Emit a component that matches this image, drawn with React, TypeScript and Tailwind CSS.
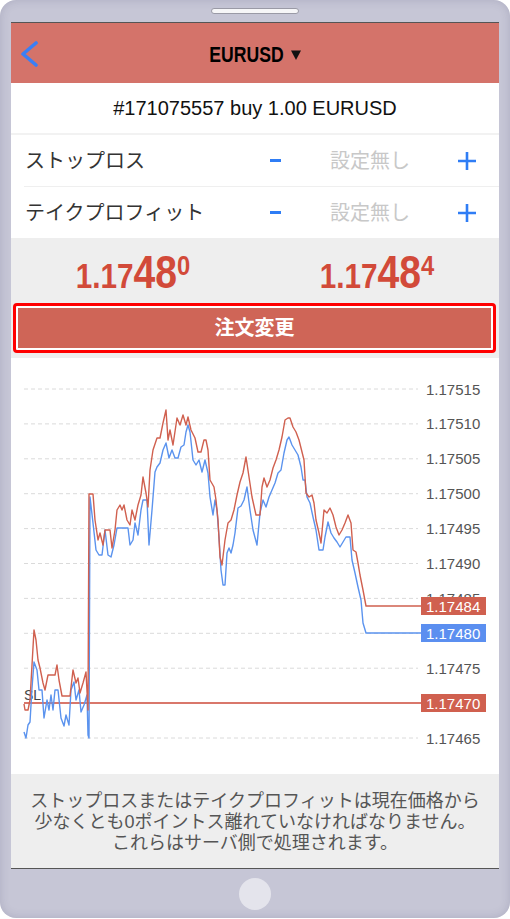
import React from 'react';

// screen-space points of the ask (red) and bid (blue) series, shifted into the chart svg below
const ASK: [number, number][] = [
  [24, 704], [25, 710], [28, 710], [30, 700], [34, 630], [36, 640], [38, 660], [40, 668], [43, 683], [45, 690],
  [48, 675], [55, 675], [57, 665], [59, 680], [62, 696], [70, 696], [73, 670], [76, 683], [78, 678], [80, 693],
  [83, 683], [86, 672], [88, 710], [89, 494], [93, 494], [95, 520], [98, 540], [100, 533], [103, 545], [105, 530],
  [110, 530], [112, 548], [115, 530], [117, 510], [120, 505], [122, 510], [124, 505], [127, 520], [130, 525],
  [132, 510], [135, 520], [138, 505], [141, 495], [143, 477], [146, 493], [148, 507], [150, 470], [153, 450],
  [157, 438], [160, 438], [163, 423], [166, 410], [168, 440], [170, 430], [173, 445], [177, 418], [180, 425],
  [183, 415], [186, 425], [188, 417], [191, 430], [195, 438], [198, 452], [201, 452], [204, 440], [206, 440],
  [208, 450], [210, 480], [214, 487], [216, 500], [218, 520], [220, 557], [222, 565], [225, 540], [228, 523],
  [231, 520], [234, 510], [237, 495], [240, 482], [243, 473], [246, 457], [249, 477], [252, 497], [256, 515],
  [260, 515], [262, 487], [264, 478], [267, 487], [270, 480], [273, 468], [276, 460], [279, 450], [282, 437],
  [285, 420], [288, 418], [290, 418], [293, 427], [296, 432], [299, 440], [302, 452], [304, 460], [306, 493],
  [309, 497], [312, 495], [314, 503], [316, 520], [319, 533], [321, 543], [324, 510], [327, 513], [330, 508],
  [333, 515], [336, 527], [339, 535], [342, 530], [345, 523], [348, 515], [351, 523], [353, 550], [356, 552],
  [358, 563], [360, 575], [363, 590], [366, 606], [421, 606],
];

const BID: [number, number][] = [
  [24, 732], [26, 738], [28, 725], [30, 722], [32, 688], [34, 662], [37, 670], [39, 690], [42, 690], [44, 718],
  [47, 700], [49, 710], [51, 695], [53, 710], [55, 690], [58, 690], [61, 718], [64, 726], [66, 715], [69, 725],
  [71, 690], [74, 682], [76, 700], [79, 690], [81, 712], [84, 705], [87, 695], [88, 735], [89, 738], [90, 497],
  [93, 523], [96, 550], [99, 555], [102, 555], [105, 530], [108, 555], [111, 557], [114, 545], [117, 528],
  [120, 528], [128, 528], [130, 545], [133, 540], [135, 523], [138, 535], [141, 510], [143, 500], [147, 500],
  [149, 545], [152, 510], [155, 472], [157, 467], [160, 463], [163, 450], [166, 443], [169, 458], [172, 450],
  [175, 458], [178, 458], [181, 447], [184, 445], [186, 432], [188, 425], [190, 432], [193, 460], [196, 465],
  [199, 460], [202, 472], [205, 460], [208, 473], [210, 497], [213, 515], [215, 500], [217, 510], [219, 537],
  [221, 570], [223, 585], [225, 585], [227, 553], [229, 548], [231, 553], [233, 545], [235, 533], [238, 508],
  [241, 506], [244, 500], [247, 487], [250, 510], [253, 530], [257, 545], [260, 513], [263, 500], [266, 507],
  [269, 497], [272, 490], [275, 483], [278, 473], [281, 470], [284, 453], [287, 440], [289, 437], [292, 445],
  [295, 450], [298, 455], [301, 467], [303, 480], [305, 480], [307, 497], [310, 503], [313, 517], [316, 530],
  [319, 550], [323, 550], [325, 537], [328, 522], [331, 533], [334, 538], [337, 542], [340, 547], [343, 542],
  [346, 537], [350, 537], [352, 560], [355, 573], [358, 587], [361, 600], [363, 623], [366, 633], [421, 633],
];

const LEVELS = ['1.17515', '1.17510', '1.17505', '1.17500', '1.17495', '1.17490', '1.17485', '1.17480', '1.17475', '1.17470', '1.17465'];

const priceY = (p: number) => 31 + ((1.17515 - p) * 100000) * 6.98;
const toPath = (pts: [number, number][]) => pts.map(([x, y]) => `${x - 11},${y - 358}`).join(' ');

function Chart() {
  return (
    <svg width="488" height="416" viewBox="0 0 488 416" className="block">
      {LEVELS.map((l) => {
        const y = priceY(parseFloat(l));
        return (
          <g key={l}>
            <line x1="13" x2="407" y1={y} y2={y} stroke="#dadada" strokeWidth="1" strokeDasharray="4 3" />
            <text x="415" y={y} dominantBaseline="central" fontSize="15" fill="#555" fontFamily="Liberation Sans, sans-serif">
              {l}
            </text>
          </g>
        );
      })}
      <line x1="13" x2="410" y1="345" y2="345" stroke="#d9776b" strokeWidth="2" />
      <text x="13" y="342" fontSize="14" fill="#444" fontFamily="Liberation Sans, sans-serif">SL</text>
      <polyline points={toPath(BID)} fill="none" stroke="#5b93ee" strokeWidth="1.4" strokeLinejoin="round" />
      <polyline points={toPath(ASK)} fill="none" stroke="#d0604f" strokeWidth="1.4" strokeLinejoin="round" />
      {[
        { v: '1.17484', y: 248, c: '#d0604f' },
        { v: '1.17480', y: 275, c: '#5b8ff0' },
        { v: '1.17470', y: 345, c: '#d0604f' },
      ].map((b) => (
        <g key={b.v}>
          <rect x="410" y={b.y - 9} width="65" height="18" fill={b.c} />
          <text x="415" y={b.y} dominantBaseline="central" fontSize="15" fill="#fff" fontFamily="Liberation Sans, sans-serif">
            {b.v}
          </text>
        </g>
      ))}
    </svg>
  );
}

function LevelRow({ label }: { label: string }) {
  return (
    <div className="flex h-[51px] items-center pl-[14px]">
      <div className="flex-1 text-[20px] text-[#333]">{label}</div>
      <div className="flex w-[40px] justify-center">
        <div className="h-[2.5px] w-[11px] bg-[#2f7df5]" />
      </div>
      <div className="w-[150px] text-center text-[20px] text-[#c8c8c8]">設定無し</div>
      <div className="flex w-[44px] justify-center">
        <svg width="20" height="20" viewBox="0 0 20 20">
          <path d="M10 1v18M1 10h18" stroke="#2f7df5" strokeWidth="2.6" />
        </svg>
      </div>
      <div className="w-[10px]" />
    </div>
  );
}

function Price({ base, big, sup }: { base: string; big: string; sup: string }) {
  return (
    <div className="flex scale-x-[0.85] items-baseline justify-center font-bold text-[#d24a39]">
      <span className="text-[35px] leading-none">{base}</span>
      <span className="text-[46px] leading-none">{big}</span>
      <span className="relative top-[-13px] text-[28px] leading-none">{sup}</span>
    </div>
  );
}

export default function App() {
  return (
    <div className="h-[919px] w-[510px] bg-white" style={{ fontFamily: '"Liberation Sans", "Noto Sans CJK JP", sans-serif' }}>
      <div className="relative flex h-[918px] flex-col rounded-[16px] bg-[#c6c6d6] px-[11px] pt-[22px] shadow-[inset_0_0_10px_rgba(60,60,100,0.18)]">
        {/* スピーカー */}
        <div className="absolute left-[211px] top-[8px] h-[6px] w-[88px] rounded-full border border-[#9a9aa6] bg-[#f6f6f8]" />

        <div className="flex flex-col border-y border-[#555] bg-white">
          {/* ヘッダー */}
          <div className="relative flex h-[60px] items-center justify-center bg-[#d4736a]">
            <svg className="absolute left-[10px] top-[17px]" width="20" height="28" viewBox="0 0 20 28">
              <polyline points="15,3 2,14 15,25" fill="none" stroke="#3a7ff6" strokeWidth="3.6" strokeLinecap="round" strokeLinejoin="round" />
            </svg>
            <div className="mt-[3px] flex items-center">
              <span className="-mx-[9.5px] inline-block scale-x-[0.8] text-[22px] font-bold leading-none text-black">EURUSD</span>
              <svg className="ml-[8px]" width="10" height="10" viewBox="0 0 10 10">
                <path d="M0 0.5h10L5 10z" fill="#111" />
              </svg>
            </div>
          </div>

          {/* 注文 */}
          <div className="flex h-[52px] items-center justify-center border-b-2 border-[#f2f2f2] text-[20px] text-[#111]">
            #171075557 buy 1.00 EURUSD
          </div>

          <LevelRow label="ストップロス" />
          <div className="ml-[13px] h-px bg-[#efefef]" />
          <LevelRow label="テイクプロフィット" />

          {/* 価格 + ボタン */}
          <div className="bg-[#eeeeee] pb-[5px]">
            <div className="grid h-[65px] grid-cols-2 pt-[11px]">
              <Price base="1.17" big="48" sup="0" />
              <Price base="1.17" big="48" sup="4" />
            </div>
            <div className="pl-[2px] pr-[3px]">
              <div className="rounded-[4px] border-[3px] border-[#ff0000] bg-white p-[2px]">
                <div className="flex h-[40px] items-center justify-center bg-[#cf6557] text-[20px] font-bold text-white">
                  注文変更
                </div>
              </div>
            </div>
          </div>

          <div className="h-[416px] bg-white">
            <Chart />
          </div>

          <div className="flex h-[94px] justify-center bg-[#eeeeee] pt-[17px] text-center text-[18px] leading-[21px] whitespace-nowrap text-[#555]">
            <p>
              ストップロスまたはテイクプロフィットは現在価格から
              <br />
              少なくとも0ポイントス離れていなければなりません。
              <br />
              これらはサーバ側で処理されます。
            </p>
          </div>
        </div>

        {/* ホームボタン */}
        <div className="flex flex-1 items-center justify-center">
          <div className="h-[32px] w-[32px] rounded-full bg-[#e4e4ec]" />
        </div>
      </div>
    </div>
  );
}
